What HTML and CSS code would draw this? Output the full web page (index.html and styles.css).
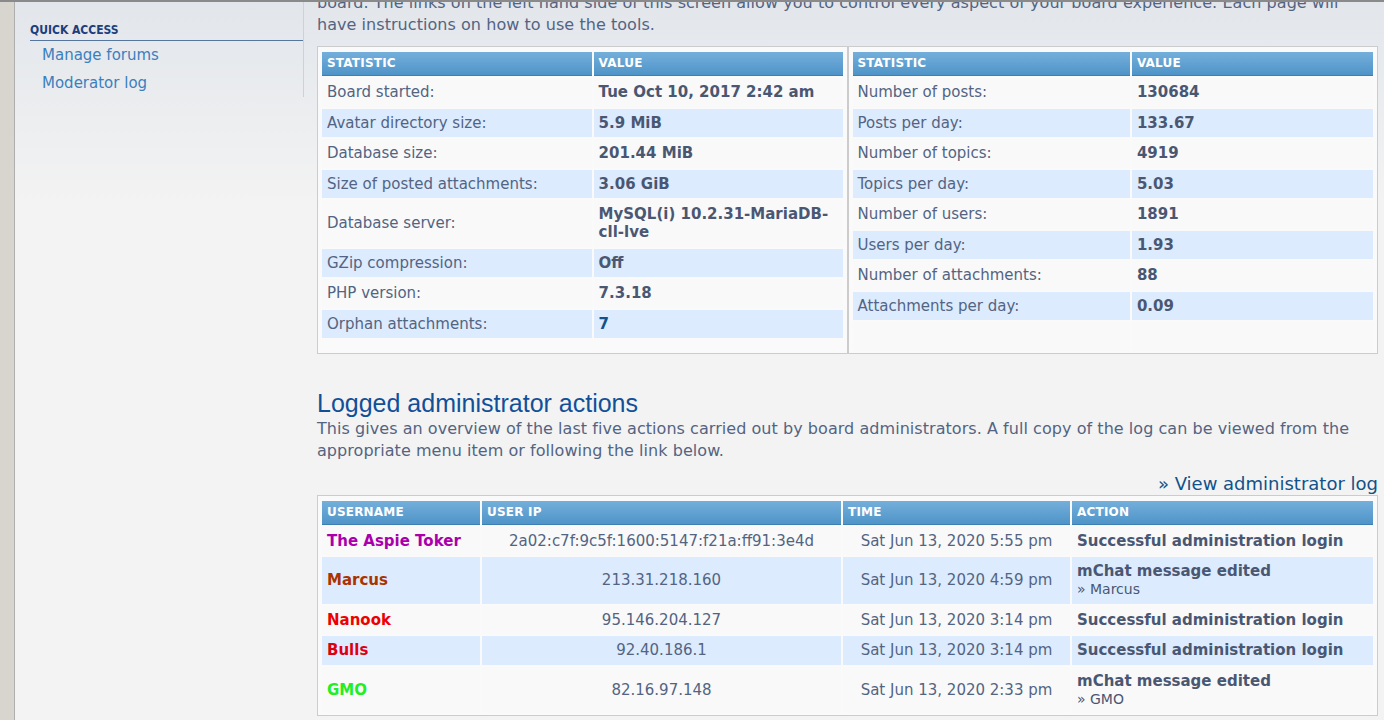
FILE: index.html
```html
<!DOCTYPE html>
<html lang="en">

<head>
    <meta charset="UTF-8">
    <meta name="viewport" content="width=device-width, initial-scale=1.0">
    <title>Administration Control Panel</title>
    <link rel="stylesheet" href="styles.css">
</head>

<body>
    <div id="wrap">
        <div id="menu">
            <div class="menu-block">
                <h3>Quick access</h3>
                <ul>
                    <li><a href="#">Manage forums</a></li>
                    <li><a href="#">Moderator log</a></li>
                </ul>
            </div>
        </div>

        <div id="main">
            <p class="intro">board. The links on the left hand side of this screen allow you to control every aspect of your board experience. Each page will have instructions on how to use the tools.</p>

            <div class="stats">
                <div class="box">
                    <table>
                        <thead>
                            <tr>
                                <th class="col-name">Statistic</th>
                                <th>Value</th>
                            </tr>
                        </thead>
                        <tbody>
                            <tr class="row1"><td>Board started:</td><td class="val">Tue Oct 10, 2017 2:42 am</td></tr>
                            <tr class="row2"><td>Avatar directory size:</td><td class="val">5.9 MiB</td></tr>
                            <tr class="row1"><td>Database size:</td><td class="val">201.44 MiB</td></tr>
                            <tr class="row2"><td>Size of posted attachments:</td><td class="val">3.06 GiB</td></tr>
                            <tr class="row1"><td>Database server:</td><td class="val">MySQL(i) 10.2.31-MariaDB-cll-lve</td></tr>
                            <tr class="row2"><td>GZip compression:</td><td class="val">Off</td></tr>
                            <tr class="row1"><td>PHP version:</td><td class="val">7.3.18</td></tr>
                            <tr class="row2"><td>Orphan attachments:</td><td class="val"><a href="#">7</a></td></tr>
                        </tbody>
                    </table>
                </div>
                <div class="box">
                    <table>
                        <thead>
                            <tr>
                                <th class="col-name wide">Statistic</th>
                                <th>Value</th>
                            </tr>
                        </thead>
                        <tbody>
                            <tr class="row1"><td>Number of posts:</td><td class="val">130684</td></tr>
                            <tr class="row2"><td>Posts per day:</td><td class="val">133.67</td></tr>
                            <tr class="row1"><td>Number of topics:</td><td class="val">4919</td></tr>
                            <tr class="row2"><td>Topics per day:</td><td class="val">5.03</td></tr>
                            <tr class="row1"><td>Number of users:</td><td class="val">1891</td></tr>
                            <tr class="row2"><td>Users per day:</td><td class="val">1.93</td></tr>
                            <tr class="row1"><td>Number of attachments:</td><td class="val">88</td></tr>
                            <tr class="row2"><td>Attachments per day:</td><td class="val">0.09</td></tr>
                            <tr class="row1"><td>&nbsp;</td><td>&nbsp;</td></tr>
                        </tbody>
                    </table>
                </div>
            </div>

            <h1>Logged administrator actions</h1>
            <p>This gives an overview of the last five actions carried out by board administrators. A full copy of the log can be viewed from the appropriate menu item or following the link below.</p>

            <div class="more"><a href="#">&raquo; View administrator log</a></div>

            <div class="box">
                <table class="log">
                    <thead>
                        <tr>
                            <th class="c-user">Username</th>
                            <th class="c-ip">User IP</th>
                            <th class="c-time">Time</th>
                            <th>Action</th>
                        </tr>
                    </thead>
                    <tbody>
                        <tr class="row1">
                            <td><a href="#" class="user" style="color: #AA00AA">The Aspie Toker</a></td>
                            <td class="center">2a02:c7f:9c5f:1600:5147:f21a:ff91:3e4d</td>
                            <td class="center">Sat Jun 13, 2020 5:55 pm</td>
                            <td class="val">Successful administration login</td>
                        </tr>
                        <tr class="row2">
                            <td><a href="#" class="user" style="color: #AA3300">Marcus</a></td>
                            <td class="center">213.31.218.160</td>
                            <td class="center">Sat Jun 13, 2020 4:59 pm</td>
                            <td class="val">mChat message edited<br><span class="sub">&raquo; Marcus</span></td>
                        </tr>
                        <tr class="row1">
                            <td><a href="#" class="user" style="color: #EE0000">Nanook</a></td>
                            <td class="center">95.146.204.127</td>
                            <td class="center">Sat Jun 13, 2020 3:14 pm</td>
                            <td class="val">Successful administration login</td>
                        </tr>
                        <tr class="row2">
                            <td><a href="#" class="user" style="color: #DD0011">Bulls</a></td>
                            <td class="center">92.40.186.1</td>
                            <td class="center">Sat Jun 13, 2020 3:14 pm</td>
                            <td class="val">Successful administration login</td>
                        </tr>
                        <tr class="row1">
                            <td><a href="#" class="user" style="color: #22EE22">GMO</a></td>
                            <td class="center">82.16.97.148</td>
                            <td class="center">Sat Jun 13, 2020 2:33 pm</td>
                            <td class="val">mChat message edited<br><span class="sub">&raquo; GMO</span></td>
                        </tr>
                    </tbody>
                </table>
            </div>
        </div>
    </div>
</body>

</html>
```

FILE: styles.css
```css
html,
body {
    margin: 0;
    padding: 0;
}

body {
    background: #d8d5ce;
    border-top: 2px solid #8a8a8a;
    font-family: "DejaVu Sans", Verdana, sans-serif;
    font-size: 15px;
    color: #536482;
}

a {
    text-decoration: none;
}

#wrap {
    margin-left: 14px;
    border-left: 1px solid #aeaeae;
    min-height: 718px;
    background: linear-gradient(#e2e6eb, #f3f3f3 200px);
    display: flex;
    overflow: hidden;
}

/* left hand menu */
#menu {
    width: 289px;
    flex: none;
}

.menu-block {
    border-right: 1px solid #cdd2d8;
    padding: 20px 0 0 15px;
}

.menu-block h3 {
    margin: 0;
    padding-bottom: 2px;
    font-family: "DejaVu Sans Condensed", Tahoma, sans-serif;
    font-size: 12px;
    line-height: 16px;
    font-weight: bold;
    text-transform: uppercase;
    color: #1c3f7c;
    border-bottom: 1px solid #55779f;
}

.menu-block ul {
    list-style: none;
    margin: 0;
    padding: 0;
}

.menu-block li {
    padding-left: 12px;
    line-height: 28px;
    font-size: 15px;
}

.menu-block a {
    color: #3b80be;
}

/* page body */
#main {
    flex: 1;
    padding: 0 6px 0 13px;
}

#main p {
    margin: 0;
    font-size: 16px;
    line-height: 22px;
    letter-spacing: 0.05px;
}

#main p.intro {
    margin-top: -10px;
    margin-bottom: 10px;
}

h1 {
    margin: 35px 0 0;
    font-family: "Liberation Sans", "Trebuchet MS", sans-serif;
    font-size: 25px;
    line-height: 29px;
    font-weight: normal;
    color: #115098;
}

.more {
    text-align: right;
    margin-top: 11px;
    font-size: 18px;
    line-height: 22px;
}

.more a {
    color: #105289;
}

/* tables */
.stats {
    display: flex;
}

.box {
    flex: 1;
    border: 1px solid #cccccc;
    background: #fafafa;
    padding: 3px 2px 0;
}

table {
    width: 100%;
    border-spacing: 2px;
}

th {
    background: linear-gradient(#74afdb, #4f94c8);
    border-bottom: 1px solid #3d7fb2;
    color: #fff;
    font-size: 12px;
    font-weight: bold;
    letter-spacing: 0.2px;
    line-height: 15px;
    text-transform: uppercase;
    text-align: left;
    padding: 4px 5px;
}

th.col-name {
    width: 52%;
}

th.col-name.wide {
    width: 53.5%;
}

td {
    padding: 5.25px 5px;
    line-height: 18px;
    vertical-align: middle;
}

tr.row1 td {
    background: #f9f9f9;
}

tr.row2 td {
    background: #dcebfe;
}

td.val {
    font-weight: bold;
    color: #4a5772;
}

td.val a {
    color: #105289;
}

td.center {
    text-align: center;
}

.log th.c-user {
    width: 148px;
}

.log th.c-ip {
    width: 349px;
}

.log th.c-time {
    width: 217px;
}

.user {
    font-weight: bold;
}

.sub {
    font-weight: normal;
    font-size: 14px;
    line-height: 16px;
}
```
